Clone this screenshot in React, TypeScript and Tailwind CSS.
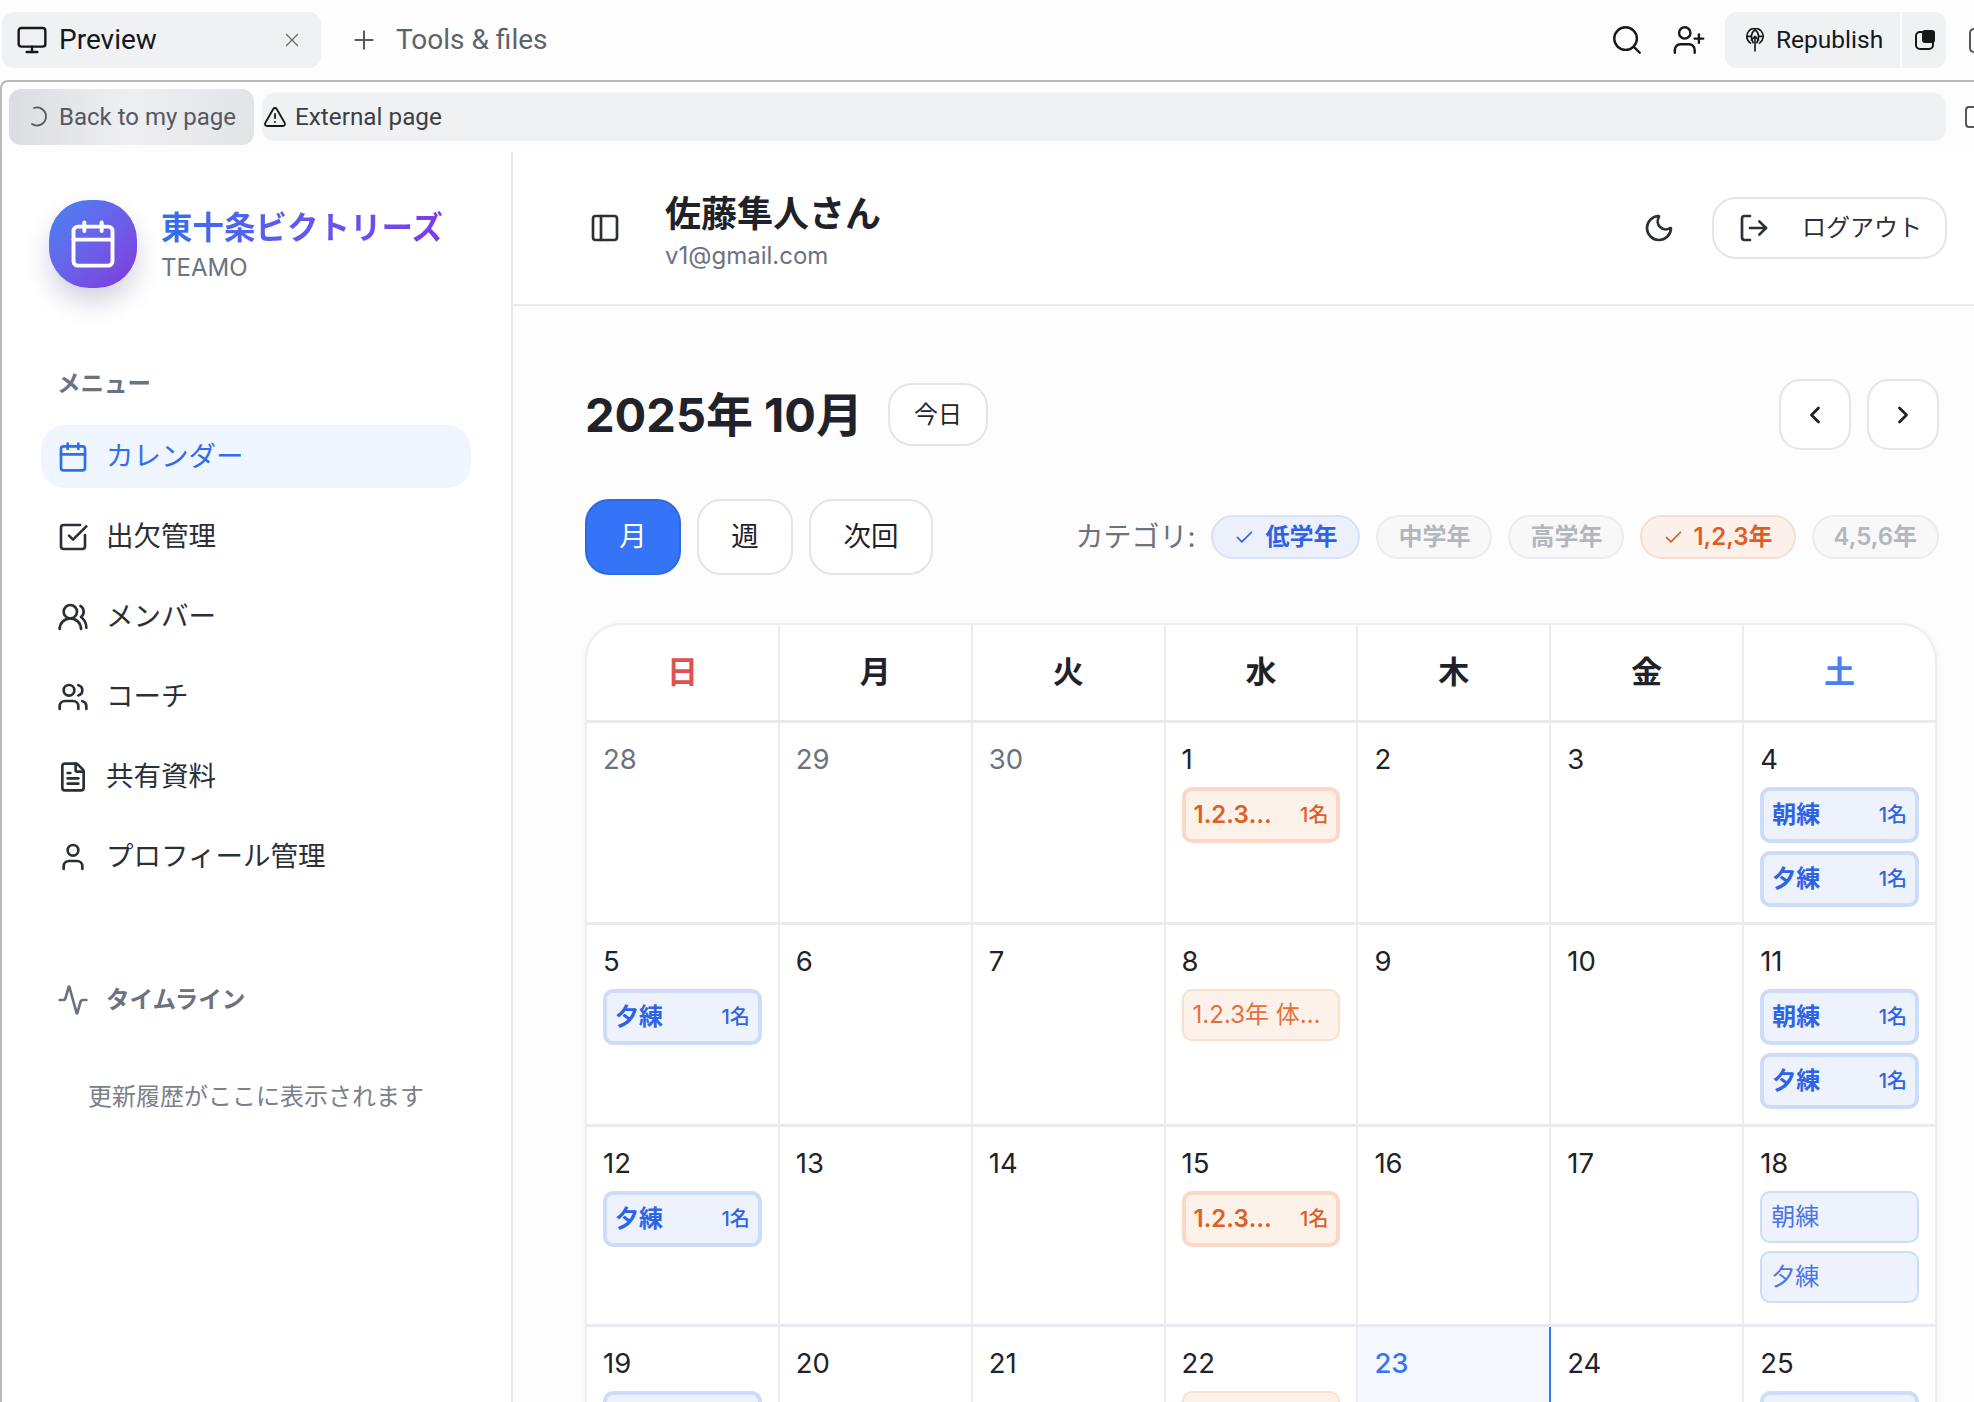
import { Activity, Calendar, Check, ChevronLeft, ChevronRight, FileText, LogOut, Monitor, Moon, PanelLeft, Plus, Search, SquareCheckBig, TriangleAlert, User, UserPlus, Users, UsersRound, X } from 'lucide-react'

type Ev = { name: string; kind: 'blue' | 'orange'; strong: boolean; count?: string }

type Day = { n: number; muted?: boolean; today?: boolean; events?: Ev[] }

const morning: Ev = { name: '朝練', kind: 'blue', strong: true, count: '1名' }
const evening: Ev = { name: '夕練', kind: 'blue', strong: true, count: '1名' }
const grade: Ev = { name: '1.2.3年 体験練習', kind: 'orange', strong: true, count: '1名' }

const days: Day[] = [
  { n: 28, muted: true }, { n: 29, muted: true }, { n: 30, muted: true },
  { n: 1, events: [grade] }, { n: 2 }, { n: 3 }, { n: 4, events: [morning, evening] },
  { n: 5, events: [evening] }, { n: 6 }, { n: 7 },
  { n: 8, events: [{ name: '1.2.3年 体験練習', kind: 'orange', strong: false }] }, { n: 9 }, { n: 10 }, { n: 11, events: [morning, evening] },
  { n: 12, events: [evening] }, { n: 13 }, { n: 14 }, { n: 15, events: [grade] }, { n: 16 }, { n: 17 },
  { n: 18, events: [{ name: '朝練', kind: 'blue', strong: false }, { name: '夕練', kind: 'blue', strong: false }] },
  { n: 19, events: [evening] }, { n: 20 }, { n: 21 },
  { n: 22, events: [{ name: '1.2.3年 体験練習', kind: 'orange', strong: false }] }, { n: 23, today: true }, { n: 24 }, { n: 25, events: [morning, evening] },
]

const menu = [
  { label: '出欠管理', icon: SquareCheckBig },
  { label: 'メンバー', icon: UsersRound },
  { label: 'コーチ', icon: Users },
  { label: '共有資料', icon: FileText },
  { label: 'プロフィール管理', icon: User },
]

function EventChip({ ev }: { ev: Ev }) {
  const color = ev.kind === 'blue'
    ? ev.strong ? 'border-[#cddcf9] bg-[#edf2fd] text-[#2f63e6]' : 'border-[#cddcf9] bg-[#edf2fd] text-[#4a74e8]'
    : ev.strong ? 'border-[#f9d9c6] bg-[#fdf2ea] text-[#dd5f26]' : 'border-[#f9dfcf] bg-[#fdf2ea] text-[#e4703c]'
  return (
    <div className={`flex w-full items-center gap-[18px] rounded-[10px] ${color} ${ev.strong ? 'h-[56px] border-4 px-[8px]' : 'h-[52px] border-2 px-[9px]'}`}>
      <span className={`min-w-0 flex-1 truncate text-[24px] ${ev.strong ? 'font-semibold' : 'font-normal'}`}>{ev.name}</span>
      {ev.count && <span className="shrink-0 text-[20px] font-medium">{ev.count}</span>}
    </div>
  )
}

function DayCell({ day, index }: { day: Day; index: number }) {
  const rowHeight = index >= 14 && index < 21 ? 'h-[200px]' : 'h-[202px]'
  return (
    <div className={`flex flex-col border-b-[3px] border-r-2 border-b-[#e9e9ef] px-[16px] pt-[16px] ${rowHeight} ${day.today ? 'border-r-[#3574f6] bg-[#f5f8ff]' : 'border-r-[#ebebf0] bg-white'}`}>
      <div className={`mb-[7px] h-[41px] text-[27.5px] leading-[41px] ${day.muted ? 'text-[#6b7280]' : day.today ? 'font-medium text-[#3574f6]' : 'text-[#1f2329]'}`}>{day.n}</div>
      <div className="flex flex-col gap-2">
        {day.events?.map((ev, i) => <EventChip key={i} ev={ev} />)}
      </div>
    </div>
  )
}

function GlobeUp() {
  return (
    <svg width="20" height="24" viewBox="0 0 22 26" fill="none" stroke="currentColor" strokeWidth="1.8" strokeLinecap="round" strokeLinejoin="round">
      <path d="M6 16.500A9 9 0 1 1 16 16.500" />
      <path d="M2 9h5M15 9h5" />
      <path d="M11 1.500C8 4 7 7 7 9c0 2.500.8 5 2 7M11 1.500C14 4 15 7 15 9c0 2.500-.8 5-2 7" />
      <path d="M11 25V9M7 13l4-4 4 4" />
    </svg>
  )
}

function Chip({ label, on }: { label: string; on?: 'blue' | 'orange' }) {
  const cls = on === 'blue'
    ? 'border-[#d8e2f6] bg-[#ebf0fb] text-[#2f63e6] font-semibold px-[21px] gap-[10px]'
    : on === 'orange'
      ? 'border-[#f5dfd2] bg-[#fcf1ea] text-[#dd5f26] font-semibold px-[21px] gap-[9px]'
      : 'border-[#ececf0] bg-[#f8f8f9] text-[#b3b6bd] font-semibold px-[20px]'
  return (
    <div className={`flex h-[44px] items-center rounded-full border-2 text-[24px] ${cls}`}>
      {on && <Check size={21} strokeWidth={2} />}
      <span>{label}</span>
    </div>
  )
}

export default function App() {
  return (
    <div className="h-screen w-screen overflow-hidden bg-[#fdfdfd] font-['Inter','Noto_Sans_CJK_JP',sans-serif] text-[#1f2329]">
      {/* outer tool bar */}
      <div className="flex h-20 items-center pl-[2px] font-['Roboto','Noto_Sans',sans-serif]">
        <div className="flex h-[56px] w-[319px] items-center rounded-xl bg-[#f0f1f3] pl-[14px] pr-[18px]">
          <Monitor size={32} strokeWidth={1.8} className="text-[#16181c]" />
          <span className="ml-[11px] flex-1 text-[28px] text-[#16181c]">Preview</span>
          <X size={22} strokeWidth={1.4} className="text-[#6b6f76]" />
        </div>
        <Plus size={30} strokeWidth={1.6} className="ml-[28px] text-[#55595f]" />
        <span className="ml-[17px] flex-1 text-[28px] text-[#5f6368]">Tools &amp; files</span>
        <Search size={34} strokeWidth={1.7} className="text-[#16181c]" />
        <UserPlus size={34} strokeWidth={1.7} className="ml-[28px] text-[#16181c]" />
        <div className="ml-[19px] flex h-[56px] w-[175px] items-center rounded-l-xl bg-[#f0f1f3] pl-[20px] text-[#16181c]">
          <GlobeUp />
          <span className="ml-[11px] text-[24.5px]">Republish</span>
        </div>
        <div className="ml-[2px] flex h-[56px] w-[44px] items-center justify-center rounded-r-xl bg-[#f0f1f3]">
          <div className="relative h-[19px] w-[19px] rounded-[5px] border-2 border-[#16181c]">
            <div className="absolute -right-[3px] -top-[3px] h-[13px] w-[13px] rounded-[3px] bg-[#16181c]" />
          </div>
        </div>
        <div className="ml-[23px] h-[25px] w-[5px] rounded-l-[5px] border-y-2 border-l-2 border-[#55595f]" />
      </div>

      {/* framed preview */}
      <div className="h-[1322px] rounded-tl-lg border-l-2 border-t-2 border-[#b9b9b9]">
        {/* url bar */}
        <div className="flex h-[70px] items-center gap-[8px] pl-[7px] font-['Roboto','Noto_Sans',sans-serif]">
          <div className="flex h-[56px] w-[245px] shrink-0 items-center rounded-xl bg-gradient-to-r from-[#dcdde0] via-[#eeeff1] to-[#e3e4e7] pl-[20px] text-[#55595f]">
            <svg width="20" height="24" viewBox="0 0 20 24" fill="none" stroke="currentColor" strokeWidth="1.8" strokeLinecap="round"><path d="M5 3a9 9 0 1 1-2 16" /></svg>
            <span className="ml-[10px] text-[24px]">Back to my page</span>
          </div>
          <div className="flex h-[48px] w-[1684px] shrink-0 items-center rounded-xl bg-[#f0f1f3] pl-[1px] text-[#3b3f45]">
            <TriangleAlert size={24} strokeWidth={1.8} className="text-[#16181c]" />
            <span className="ml-[8px] text-[24.300px]">External page</span>
          </div>
          <div className="ml-[11px] h-[22px] w-[9px] shrink-0 rounded-l-[4px] border-y-2 border-l-2 border-[#55595f]" />
        </div>

        <div className="flex h-[1250px]">
          {/* sidebar */}
          <aside className="w-[511px] shrink-0 border-r-2 border-[#e9e9ef] bg-white pl-[39px] pr-[40px] pt-[48px]">
            <div className="ml-[8px] flex items-center gap-[24px]">
              <div className="flex h-[88px] w-[88px] items-center justify-center rounded-[40px] bg-gradient-to-br from-[#3f83f4] to-[#7e35dd] shadow-[0_14px_24px_rgba(60,60,120,0.22)]">
                <Calendar size={52} strokeWidth={1.8} className="text-white" />
              </div>
              <div className="pt-[2px]">
                <div className="bg-gradient-to-r from-[#2f6fed] to-[#7c3aed] bg-clip-text text-[31.5px] font-semibold leading-[46px] text-transparent">東十条ビクトリーズ</div>
                <div className="text-[24px] leading-[34px] text-[#6b7280]">TEAMO</div>
              </div>
            </div>

            <div className="ml-[16px] mt-[78px] h-[36px] text-[23.5px] font-semibold leading-[36px] text-[#6b7280]">メニュー</div>
            <div className="mt-[23px] flex flex-col gap-[17px]">
              <div className="flex h-[63px] items-center gap-[17px] rounded-3xl bg-[#eff6ff] px-[16px] text-[#2f6fed]">
                <Calendar size={32} strokeWidth={2} />
                <span className="text-[27.5px]">カレンダー</span>
              </div>
              {menu.map((item) => (
                <div key={item.label} className="flex h-[63px] items-center gap-[17px] rounded-3xl px-[16px] text-[#2b2f36]">
                  <item.icon size={32} strokeWidth={2} />
                  <span className="text-[27.5px]">{item.label}</span>
                </div>
              ))}
            </div>

            <div className="ml-[16px] mt-[90px] flex h-[44px] items-center gap-[17px] text-[#6b7280]">
              <Activity size={32} strokeWidth={2} />
              <span className="text-[23.5px] font-semibold">タイムライン</span>
            </div>
            <div className="mt-[57px] text-center text-[24px] leading-[36px] text-[#7b808a]">更新履歴がここに表示されます</div>
          </aside>

          {/* main */}
          <main className="min-w-0 flex-1">
            <header className="flex h-[154px] items-center border-b-2 border-[#e9e9ef] bg-white pl-[76px] pr-[27px]">
              <PanelLeft size={32} strokeWidth={2} className="text-[#2b2f36]" />
              <div className="ml-[44px] flex-1 pt-[5px]">
                <div className="text-[36px] font-semibold leading-[50px]">佐藤隼人さん</div>
                <div className="text-[24px] leading-[34px] text-[#6b7280]">v1@gmail.com</div>
              </div>
              <Moon size={32} strokeWidth={2} className="text-[#2b2f36]" />
              <button className="ml-[37px] flex h-[62px] w-[235px] items-center rounded-3xl border-2 border-[#e5e5e8] pl-[24px] text-[#2b2f36]">
                <LogOut size={32} strokeWidth={2} />
                <span className="ml-[32px] text-[24px]">ログアウト</span>
              </button>
            </header>

            <div className="pl-[72px] pr-[35px] pt-[73px]">
              <div className="flex h-[71px] items-center">
                <h1 className="text-[47px] font-bold leading-none">2025年 10月</h1>
                <button className="ml-[25px] h-[63px] w-[100px] rounded-3xl border-2 border-[#e5e5e8] bg-white text-[24px]">今日</button>
                <div className="ml-auto flex gap-[16px]">
                  <button className="flex h-[71px] w-[72px] items-center justify-center rounded-[22px] border-2 border-[#e5e5e8] bg-white"><ChevronLeft size={28} strokeWidth={2.4} /></button>
                  <button className="flex h-[71px] w-[72px] items-center justify-center rounded-[22px] border-2 border-[#e5e5e8] bg-white"><ChevronRight size={28} strokeWidth={2.4} /></button>
                </div>
              </div>

              <div className="mt-[49px] flex h-[76px] items-center">
                <button className="h-[76px] w-[96px] rounded-3xl border-2 border-[#2f68e6] bg-[#3574f6] text-[27.5px] text-white">月</button>
                <button className="ml-[16px] h-[76px] w-[96px] rounded-3xl border-2 border-[#e5e5e8] bg-white text-[27.5px]">週</button>
                <button className="ml-[16px] h-[76px] w-[124px] rounded-3xl border-2 border-[#e5e5e8] bg-white text-[27.5px]">次回</button>
                <div className="ml-auto flex items-center gap-[16px]">
                  <span className="text-[28px] text-[#6b7280]">カテゴリ:</span>
                  <Chip label="低学年" on="blue" />
                  <Chip label="中学年" />
                  <Chip label="高学年" />
                  <Chip label="1,2,3年" on="orange" />
                  <Chip label="4,5,6年" />
                </div>
              </div>

              {/* calendar */}
              <div className="mt-[48px] w-[1352px] rounded-t-[36px] border-l-2 border-t-2 border-[#eeeef2] bg-white shadow-[0_2px_8px_rgba(0,0,0,0.05)]">
                <div className="grid grid-cols-7">
                  {['日', '月', '火', '水', '木', '金', '土'].map((d, i) => (
                    <div key={d} className={`flex h-[98px] items-center justify-center border-b-[3px] border-r-2 border-b-[#e9e9ef] border-r-[#ebebf0] text-[31px] font-semibold ${i === 6 ? 'rounded-tr-[36px]' : ''} ${i === 0 ? 'text-[#e05252]' : i === 6 ? 'text-[#4a80f0]' : 'text-[#1f2329]'}`}>{d}</div>
                  ))}
                  {days.map((day, i) => <DayCell key={i} day={day} index={i} />)}
                </div>
              </div>
            </div>
          </main>
        </div>
      </div>
    </div>
  )
}
